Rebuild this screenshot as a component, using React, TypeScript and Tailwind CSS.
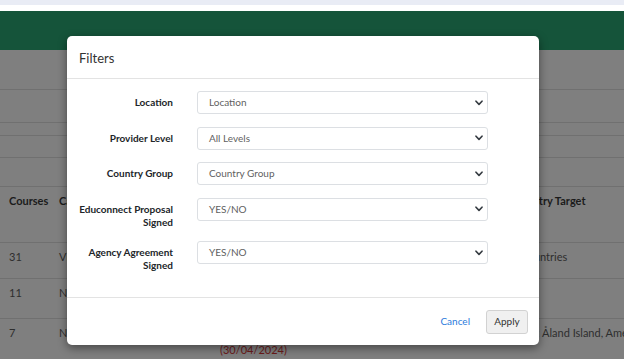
import { ReactNode } from 'react'

const font = { fontFamily: 'Lato, "Open Sans", sans-serif' }

function Chevron() {
  return (
    <svg width="8" height="6" viewBox="0 0 8 6" className="shrink-0">
      <path d="M1 1.2 L4 4.4 L7 1.2" fill="none" stroke="#343a40" strokeWidth="1.6" strokeLinecap="round" strokeLinejoin="round" />
    </svg>
  )
}

function FilterRow({ label, value }: { label: ReactNode; value: string }) {
  return (
    <div className="flex items-start">
      <div className="w-[100px] shrink-0 whitespace-nowrap pt-[5px] text-right text-[10px] font-bold leading-[13px] text-[#212529]">
        {label}
      </div>
      <div className="ml-[24px] flex h-[23px] w-[291px] items-center justify-between rounded-[3px] border border-[#dcdfe3] bg-white pl-[11px] pr-[4px] text-[10px] text-[#5f5f5f]">
        <span>{value}</span>
        <Chevron />
      </div>
    </div>
  )
}

export default function App() {
  return (
    <div className="relative h-[359px] w-[624px] overflow-hidden bg-[#7f7f7f]" style={font}>
      {/* page behind the backdrop */}
      <div className="h-[5px] bg-[#e9ecf5]" />
      <div className="h-[6px] bg-white" />
      <div className="h-[39px] bg-[#15543a]" />
      <div className="h-[40px] border-b border-[#707070]" />
      <div className="h-[33px] border-b border-[#707070]" />
      <div className="h-[13px] border-b border-[#707070]" />
      <div className="h-[22px] border-b border-[#707070]" />
      <div className="h-[29px] border-b border-[#707070]" />

      <div className="flex h-[56px] border-b border-[#707070] pt-[6px] text-[11px] font-bold text-[#1b1b1b]">
        <div className="w-[59px] shrink-0 pl-[9px]">Courses</div>
        <div className="w-[454px] shrink-0">Campus</div>
        <div className="whitespace-nowrap">Country Target</div>
      </div>
      <div className="flex h-[36px] border-b border-[#707070] pt-[6px] text-[11px] text-[#2e2e2e]">
        <div className="w-[59px] shrink-0 pl-[9px]">31</div>
        <div className="w-[446px] shrink-0">Victoria</div>
        <div className="whitespace-nowrap">All Countries</div>
      </div>
      <div className="flex h-[40px] border-b border-[#707070] pt-[6px] text-[11px] text-[#2e2e2e]">
        <div className="w-[59px] shrink-0 pl-[9px]">11</div>
        <div className="w-[441px] shrink-0">New South Wales</div>
        <div />
      </div>
      <div className="flex pt-[6px] text-[11px] text-[#2e2e2e]">
        <div className="w-[59px] shrink-0 pl-[9px]">7</div>
        <div className="w-[431px] shrink-0">
          <div>New South Wales</div>
          <div className="pl-[161px] text-[#6b1a1a]">(30/04/2024)</div>
        </div>
        <div className="min-w-0 overflow-hidden whitespace-nowrap">Countries: Åland Island, American Samoa</div>
      </div>

      {/* modal */}
      <div className="absolute left-[67px] top-[36px] w-[472px] rounded-[5px] bg-white shadow-[0_3px_10px_rgba(0,0,0,0.45)]">
        <div className="flex h-[43px] items-center border-b border-[#e3e3e3] px-[12px] pt-[3px] text-[13px] text-[#333]">
          Filters
        </div>
        <div className="flex flex-col gap-[12.5px] pb-[25px] pl-[6px] pt-[12px]">
          <FilterRow label="Location" value="Location" />
          <FilterRow label="Provider Level" value="All Levels" />
          <FilterRow label="Country Group" value="Country Group" />
          <FilterRow label={<>Educonnect Proposal<br />Signed</>} value="YES/NO" />
          <FilterRow label={<>Agency Agreement<br />Signed</>} value="YES/NO" />
        </div>
        <div className="flex h-[48px] items-center justify-end gap-[16px] border-t border-[#e3e3e3] pr-[11px] text-[10px]">
          <span className="text-[#2b7bdc]">Cancel</span>
          <div className="flex h-[24px] w-[42px] items-center justify-center rounded-[3px] border border-[#d2d2d2] bg-[#f0f0f0] text-[#333]">
            Apply
          </div>
        </div>
      </div>
    </div>
  )
}
